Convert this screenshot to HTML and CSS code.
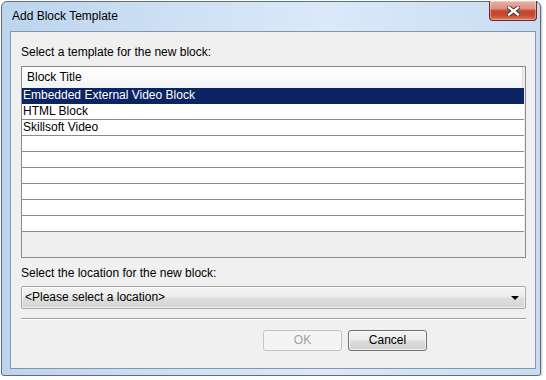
FILE: index.html
```html
<!DOCTYPE html>
<html>
<head>
<meta charset="utf-8">
<title>Add Block Template</title>
<link rel="stylesheet" href="styles.css">
</head>
<body>
<div class="window">
  <div class="titlebar">
    <span class="title">Add Block Template</span>
    <div class="close">
      <svg width="13" height="10" viewBox="0 0 13 10">
        <path d="M2 1.5 L11 8.5 M11 1.5 L2 8.5" stroke="#3b2a2a" stroke-width="4.2" stroke-linecap="square" fill="none"/>
        <path d="M2 1.5 L11 8.5 M11 1.5 L2 8.5" stroke="#ffffff" stroke-width="2.4" stroke-linecap="square" fill="none"/>
      </svg>
    </div>
  </div>
  <div class="panel">
    <div class="label first">Select a template for the new block:</div>
    <div class="list">
      <div class="list-header">Block Title</div>
      <div class="rows">
        <div class="row selected">Embedded External Video Block</div>
        <div class="row">HTML Block</div>
        <div class="row">Skillsoft Video</div>
        <div class="row"></div>
        <div class="row"></div>
        <div class="row"></div>
        <div class="row"></div>
        <div class="row"></div>
        <div class="row"></div>
      </div>
      <div class="list-empty"></div>
    </div>
    <div class="label second">Select the location for the new block:</div>
    <div class="combo">
      <span class="combo-text">&lt;Please select a location&gt;</span>
      <span class="combo-arrow"></span>
    </div>
    <div class="separator"></div>
    <div class="buttons">
      <div class="btn disabled">OK</div>
      <div class="btn">Cancel</div>
    </div>
  </div>
</div>
</body>
</html>
```
FILE: styles.css
```css
html, body {
  margin: 0;
  padding: 0;
  background: #ffffff;
}
body {
  font-family: "Liberation Sans", Arial, sans-serif;
  font-size: 12px;
  color: #000;
}
.window {
  margin: 1px 0 0 1px;
  width: 540px;
  height: 375px;
  box-sizing: border-box;
  border: 1px solid #5f6d7c;
  border-radius: 6px 6px 3px 3px;
  background: linear-gradient(to right, #bcd4ee 0%, #cfe1f5 35%, #dbe9f9 60%, #c8dcf2 100%);
  padding: 0 4px 6px 8px;
  display: flex;
  flex-direction: column;
  box-shadow: 1px 1px 2px rgba(0,0,0,0.25);
}
.titlebar {
  height: 29px;
  display: flex;
  align-items: flex-start;
  flex-shrink: 0;
}
.title {
  margin-left: 2px;
  margin-top: 7px;
  font-family: "Liberation Sans", Arial, sans-serif;
  font-size: 12px;
  line-height: 15px;
  color: #000;
}
.close {
  margin-left: auto;
  margin-right: -1px;
  margin-top: -1px;
  width: 48px;
  height: 20px;
  box-sizing: border-box;
  border: 1px solid #6e2a22;
  border-top: none;
  border-radius: 0 0 4px 4px;
  background: linear-gradient(to bottom, #e9b0a3 0%, #dc9282 40%, #c7452c 52%, #c84a31 75%, #dd7c5e 100%);
  display: flex;
  align-items: center;
  justify-content: center;
  box-shadow: inset 0 0 0 1px rgba(255,255,255,0.35);
}
.close svg {
  display: block;
  margin-top: 1px;
}
.panel {
  flex: 1;
  box-sizing: border-box;
  border: 1px solid #8596a8;
  background: #f0f0f0;
  padding: 13px 9px 0 10px;
  display: flex;
  flex-direction: column;
}
.label {
  line-height: 15px;
  height: 15px;
  white-space: nowrap;
}
.list {
  margin-top: 6px;
  height: 192px;
  box-sizing: border-box;
  border: 1px solid #8a8a8a;
  display: flex;
  flex-direction: column;
  background: #efefef;
}
.list-header {
  height: 21px;
  line-height: 21px;
  padding-left: 5px;
  background: linear-gradient(to bottom, #ffffff 0%, #fbfbfc 45%, #f1f2f4 100%);
  border-right: 1px solid #d9dbde;
  margin-right: 2px;
  flex-shrink: 0;
}
.rows {
  margin-right: 1px;
}
.row {
  height: 15px;
  line-height: 15px;
  border-bottom: 1px solid #8a8a8a;
  background: #ffffff;
  padding-left: 1px;
  white-space: nowrap;
}
.row.selected {
  background: #0c2463;
  border-bottom-color: #0c2463;
  color: #ffffff;
}
.list-empty {
  flex: 1;
}
.label.second {
  margin-top: 8px;
}
.combo {
  margin-top: 5px;
  height: 23px;
  box-sizing: border-box;
  border: 1px solid #a6a6a6;
  border-radius: 2px;
  background: linear-gradient(to bottom, #f3f3f3 0%, #ececec 48%, #dedede 52%, #d4d4d4 100%);
  display: flex;
  align-items: center;
  padding: 0 6px 0 3px;
  box-shadow: inset 0 0 0 1px rgba(255,255,255,0.6);
}
.combo-text {
  flex: 1;
  line-height: 15px;
}
.combo-arrow {
  width: 0;
  height: 0;
  border-left: 4px solid transparent;
  border-right: 4px solid transparent;
  border-top: 4px solid #000;
  margin-top: 1px;
}
.separator {
  margin-top: 9px;
  height: 1px;
  background: #a0a0a0;
  border-bottom: 1px solid #ffffff;
}
.buttons {
  margin-top: 10px;
  display: flex;
  justify-content: flex-end;
  gap: 6px;
  padding-right: 99px;
}
.btn {
  width: 79px;
  height: 21px;
  box-sizing: border-box;
  border: 1px solid #707070;
  border-radius: 3px;
  background: linear-gradient(to bottom, #f2f2f2 0%, #ebebeb 48%, #dddddd 52%, #cfcfcf 100%);
  box-shadow: inset 0 0 0 1px rgba(255,255,255,0.7);
  text-align: center;
  line-height: 19px;
}
.btn.disabled {
  border-color: #c4c4c4;
  background: #f4f4f4;
  color: #a0a0a0;
  box-shadow: none;
}
```
